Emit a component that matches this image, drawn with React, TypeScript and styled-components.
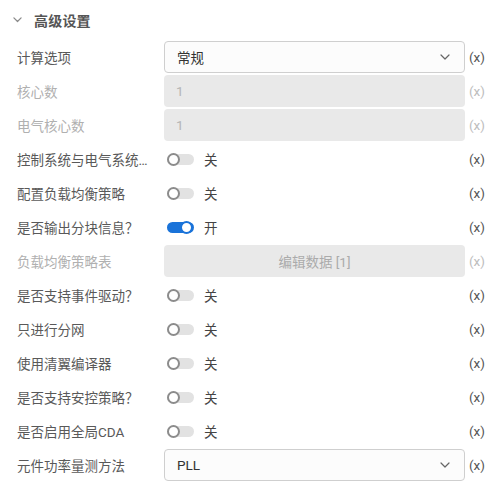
import React from 'react';
import styled, { createGlobalStyle } from 'styled-components';

const GlobalStyle = createGlobalStyle`
    body {
        margin: 0;
        background: #ffffff;
        font-family: Roboto, "Noto Sans CJK SC", sans-serif;
    }
`;

type RowKind = 'select' | 'disabled' | 'toggle' | 'button';

interface RowItem {
    label: string;
    kind: RowKind;
    value?: string;
    on?: boolean;
    disabled?: boolean;
}

const rows: RowItem[] = [
    { label: '计算选项', kind: 'select', value: '常规' },
    { label: '核心数', kind: 'disabled', value: '1', disabled: true },
    { label: '电气核心数', kind: 'disabled', value: '1', disabled: true },
    { label: '控制系统与电气系统…', kind: 'toggle', on: false },
    { label: '配置负载均衡策略', kind: 'toggle', on: false },
    { label: '是否输出分块信息？', kind: 'toggle', on: true },
    { label: '负载均衡策略表', kind: 'button', value: '编辑数据 [1]', disabled: true },
    { label: '是否支持事件驱动？', kind: 'toggle', on: false },
    { label: '只进行分网', kind: 'toggle', on: false },
    { label: '使用清翼编译器', kind: 'toggle', on: false },
    { label: '是否支持安控策略？', kind: 'toggle', on: false },
    { label: '是否启用全局CDA', kind: 'toggle', on: false },
    { label: '元件功率量测方法', kind: 'select', value: 'PLL' },
];

const Chevron = ({ size = 10, color = '#666', width = 1.2 }: { size?: number; color?: string; width?: number }) => (
    <svg width={size} height={size * 0.6} viewBox="0 0 10 6" fill="none">
        <path d="M1 1 L5 5 L9 1" stroke={color} strokeWidth={width} strokeLinecap="round" strokeLinejoin="round" />
    </svg>
);

const App = () => {
    return (
        <Panel>
            <GlobalStyle />
            <Header>
                <Chevron size={9} color="#8a8a8a" width={1.4} />
                <HeaderTitle>高级设置</HeaderTitle>
            </Header>
            {rows.map((row, index) => (
                <Row key={index}>
                    <Label $disabled={row.disabled}>{row.label}</Label>
                    <Control>
                        {row.kind === 'select' && (
                            <SelectBox>
                                <span>{row.value}</span>
                                <Chevron />
                            </SelectBox>
                        )}
                        {row.kind === 'disabled' && <DisabledBox>{row.value}</DisabledBox>}
                        {row.kind === 'button' && <EditButton>{row.value}</EditButton>}
                        {row.kind === 'toggle' && (
                            <ToggleWrap>
                                <Track $on={row.on}>
                                    <Thumb $on={row.on} />
                                </Track>
                                <ToggleText>{row.on ? '开' : '关'}</ToggleText>
                            </ToggleWrap>
                        )}
                    </Control>
                    <Expr $disabled={row.disabled}>(x)</Expr>
                </Row>
            ))}
        </Panel>
    );
};

const Panel = styled.div`
    width: 490px;
    background: #ffffff;
`;

const Header = styled.div`
    height: 40px;
    display: flex;
    align-items: center;
    padding-left: 13px;
    gap: 12px;
    box-sizing: border-box;
`;

const HeaderTitle = styled.div`
    font-size: 14px;
    font-weight: bold;
    color: #555555;
    letter-spacing: 0.2px;
`;

const Row = styled.div`
    height: 34px;
    display: flex;
    align-items: center;
`;

const Label = styled.div<{ $disabled?: boolean }>`
    width: 137px;
    margin-left: 17px;
    margin-right: 10px;
    font-size: 13.5px;
    color: ${(p) => (p.$disabled ? '#b0b0b0' : '#595959')};
    white-space: nowrap;
`;

const Control = styled.div`
    width: 301px;
    height: 32px;
    display: flex;
    align-items: center;
`;

const SelectBox = styled.div`
    width: 100%;
    height: 100%;
    box-sizing: border-box;
    border: 1px solid #cfcfcf;
    border-radius: 4px;
    background: #fcfcfc;
    display: flex;
    align-items: center;
    justify-content: space-between;
    padding: 0 14px 0 12px;
    font-size: 13.5px;
    color: #333333;
`;

const DisabledBox = styled.div`
    width: 100%;
    height: 100%;
    box-sizing: border-box;
    border-radius: 4px;
    background: #e9e9e9;
    display: flex;
    align-items: center;
    padding-left: 12px;
    font-size: 13.5px;
    color: #b5b5b5;
`;

const EditButton = styled.div`
    width: 100%;
    height: 100%;
    box-sizing: border-box;
    border-radius: 4px;
    background: #e9e9e9;
    display: flex;
    align-items: center;
    justify-content: center;
    font-size: 13.5px;
    color: #ababab;
`;

const ToggleWrap = styled.div`
    display: flex;
    align-items: center;
    padding-left: 3px;
    gap: 10px;
`;

const Track = styled.div<{ $on?: boolean }>`
    position: relative;
    width: 27px;
    height: 11px;
    border-radius: 6px;
    background: ${(p) => (p.$on ? '#1a73d9' : '#e2e2e2')};
`;

const Thumb = styled.div<{ $on?: boolean }>`
    position: absolute;
    top: -1px;
    ${(p) => (p.$on ? 'right: 1px;' : 'left: 0;')}
    width: 9px;
    height: 9px;
    border-radius: 50%;
    background: #ffffff;
    border: 2px solid ${(p) => (p.$on ? '#1a73d9' : '#8c8c8c')};
`;

const ToggleText = styled.div`
    font-size: 13.5px;
    color: #444444;
`;

const Expr = styled.div<{ $disabled?: boolean }>`
    margin-left: 4px;
    font-size: 13.5px;
    color: ${(p) => (p.$disabled ? '#bdbdbd' : '#555555')};
`;

export default App;
